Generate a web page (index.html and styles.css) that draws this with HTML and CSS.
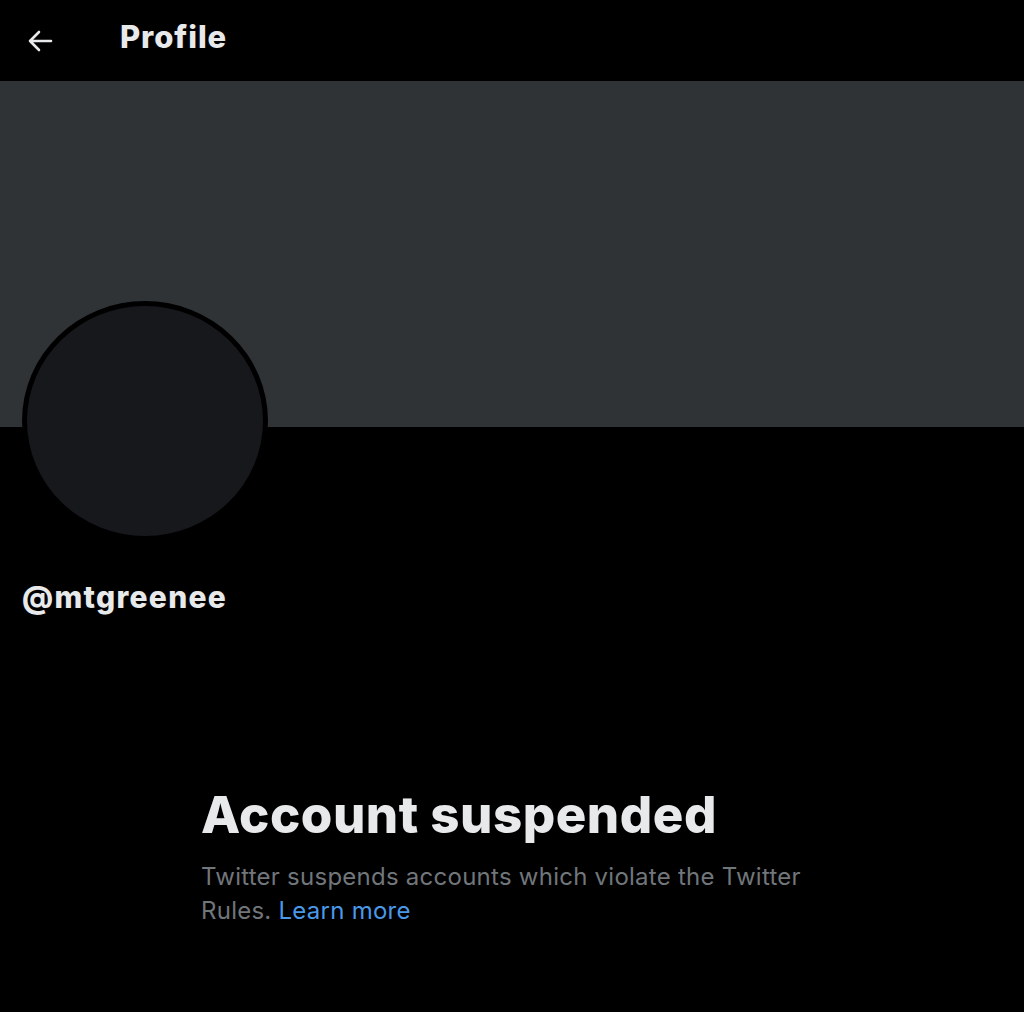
FILE: index.html
```html
<!DOCTYPE html>
<html>
<head>
<meta charset="utf-8">
<link rel="stylesheet" href="styles.css">
</head>
<body>
<header class="topbar">
  <div class="back">
    <svg width="26" height="22" viewBox="0 0 26 22"><path d="M24 11H3M12 2L3 11l9 9" fill="none" stroke="#e7e9ea" stroke-width="2.6" stroke-linecap="round" stroke-linejoin="round"/></svg>
  </div>
  <h1 class="title">Profile</h1>
</header>
<div class="banner"></div>
<section class="profile">
  <div class="avatar"></div>
  <div class="handle">@mtgreenee</div>
</section>
<section class="suspended">
  <h2 class="s-title">Account suspended</h2>
  <p class="s-text">Twitter suspends accounts which violate the Twitter Rules. <a class="link" href="#">Learn more</a></p>
</section>
</body>
</html>
```
FILE: styles.css
```css
html, body {
  margin: 0;
  padding: 0;
  background: #000;
  color: #e7e9ea;
  font-family: Inter, "Liberation Sans", Arial, sans-serif;
}
.topbar {
  height: 81px;
  display: flex;
  align-items: center;
}
.back {
  width: 26px;
  margin-left: 27px;
  display: flex;
  align-items: center;
}
.title {
  margin: 0 0 0 67px;
  font-size: 31px;
  font-weight: 800;
  color: #e7e9ea;
  letter-spacing: 0.9px;
  position: relative;
  top: -4px;
}
.banner {
  height: 346px;
  background: #303336;
}
.profile {
  padding-left: 22px;
}
.avatar {
  width: 236px;
  height: 230px;
  margin-top: -126px;
  border-radius: 50%;
  background: #17181c;
  border: 5px solid #000;
}
.handle {
  margin-top: 38px;
  font-size: 30px;
  font-weight: 800;
  color: #e7e9ea;
  line-height: 36px;
  letter-spacing: 1.3px;
}
.suspended {
  margin-left: 201px;
  margin-top: 168px;
  width: 660px;
}
.s-title {
  margin: 0;
  font-size: 51px;
  font-weight: 800;
  line-height: 64px;
  color: #e7e9ea;
  letter-spacing: 0.5px;
}
.s-text {
  margin: 13px 0 0;
  font-size: 24px;
  line-height: 34px;
  color: #71767b;
  letter-spacing: 0.25px;
  max-width: 620px;
}
.link {
  display: inline-block;
  color: #4a99e9;
  text-decoration: none;
}
```
